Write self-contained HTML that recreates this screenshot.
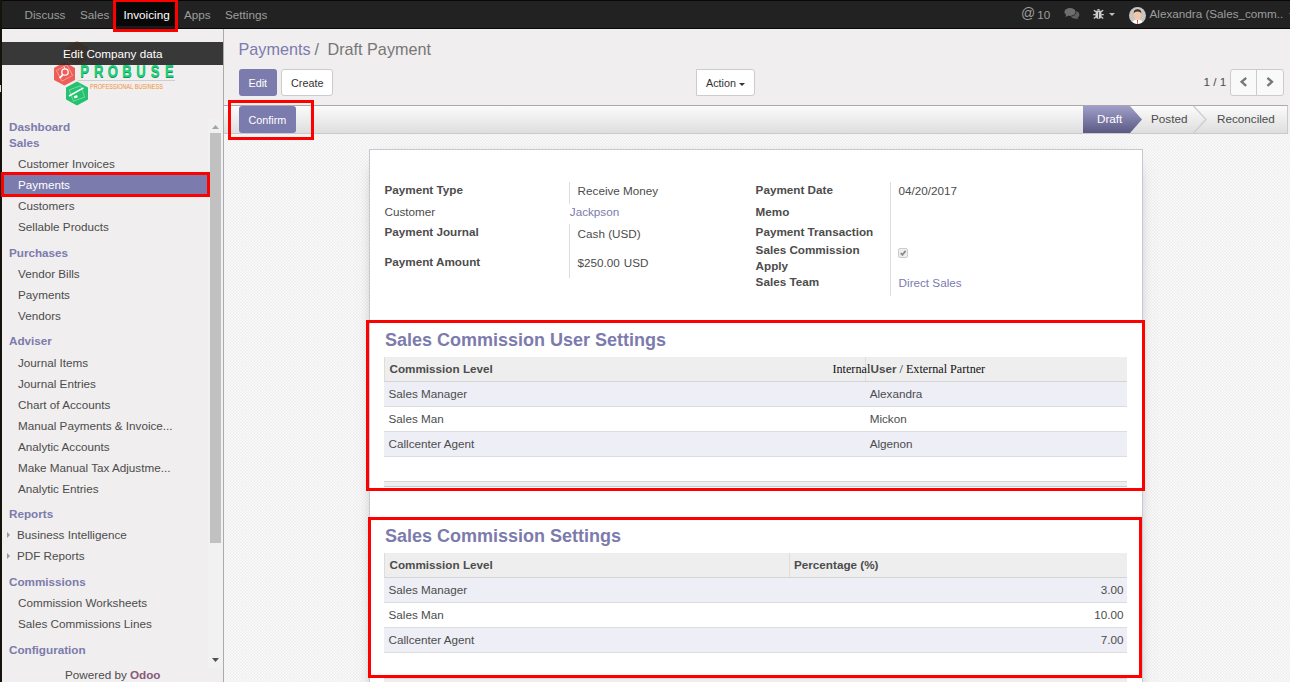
<!DOCTYPE html>
<html><head><meta charset="utf-8">
<style>
*{margin:0;padding:0;box-sizing:border-box}
html,body{width:1290px;height:682px;overflow:hidden;background:#f0eeee;font-family:"Liberation Sans",sans-serif;font-size:11.7px;color:#4c4c4c}
.a{position:absolute;white-space:nowrap;line-height:16px;height:16px}
.b{font-weight:bold}
.p{color:#7c7bad}
.box{position:absolute}
.red{position:absolute;border:3px solid #ff0000}
.nav{color:#9d9d9d}
.sh{color:#7c7bad;font-weight:bold}
.srf{font-family:"Liberation Serif",serif;color:#111}
svg{position:absolute;overflow:visible}
</style></head><body>

<div class="box" style="left:0px;top:0px;width:1290px;height:29px;background:#222;border-top:1px solid #080808;border-bottom:1px solid #080808"></div>
<div class="box" style="left:116px;top:1px;width:59px;height:25px;background:#080808"></div>
<div class="box" style="left:116px;top:26px;width:59px;height:2px;background:#1b1b1b"></div>
<div class="a nav" style="left:24.5px;top:7px;">Discuss</div>
<div class="a nav" style="left:80px;top:7px;">Sales</div>
<div class="a " style="left:123.5px;top:7px;color:#fff">Invoicing</div>
<div class="a nav" style="left:184px;top:7px;">Apps</div>
<div class="a nav" style="left:225px;top:7px;">Settings</div>
<div class="a nav" style="left:1021px;top:6px;font-size:14px;top:4.5px">@</div>
<div class="a nav" style="left:1037.3px;top:7px;">10</div>
<svg style="left:1064px;top:7px" width="16" height="13" viewBox="0 0 16 13"><ellipse cx="10.8" cy="7.8" rx="4.6" ry="3.9" fill="#606060"/><path d="M13.2 10.5 L14.6 12.2 L11 11.2Z" fill="#606060"/><ellipse cx="6" cy="5" rx="6.3" ry="4.5" fill="#222"/><ellipse cx="6" cy="5" rx="5.6" ry="3.9" fill="#6e6e6e"/><path d="M2.2 7.6 L1.4 10 L4.8 8.6Z" fill="#6e6e6e"/></svg>
<svg style="left:1093px;top:8px" width="11" height="11" viewBox="0 0 11 11"><path d="M3.6 2.4 Q5.5 -0.3 7.4 2.4Z" fill="#cdcdcd"/><path d="M3.3 2.8 H7.7 Q8.8 5.5 8.6 8.6 Q8 11 5.5 11 Q3 11 2.4 8.6 Q2.2 5.5 3.3 2.8Z" fill="#cdcdcd"/><path d="M0.8 2.2 L3.2 3.9 M10.2 2.2 L7.8 3.9 M0.2 6.6 H2.6 M10.8 6.6 H8.4 M0.8 10.6 L2.8 9 M10.2 10.6 L8.2 9" stroke="#cdcdcd" stroke-width="1.3"/><path d="M5.5 4.2 V10.4" stroke="#4a3f66" stroke-width="1"/></svg>
<svg style="left:1109px;top:13px" width="6" height="3" viewBox="0 0 6 3"><path d="M0 0H6L3 3Z" fill="#bdbdbd"/></svg>
<svg style="left:1129px;top:7px" width="17" height="17" viewBox="0 0 17 17"><defs><clipPath id="cav"><circle cx="8.5" cy="8.5" r="8.5"/></clipPath></defs><g clip-path="url(#cav)"><rect width="17" height="17" fill="#c9c5c0"/><path d="M3 17 Q3 12.5 8.5 12.5 Q14 12.5 14 17Z" fill="#fff"/><path d="M8 13 L9 13 L8.8 17 L8.2 17Z" fill="#d22"/><ellipse cx="8.5" cy="8" rx="3.6" ry="4.6" fill="#f1c7a6"/><path d="M4.7 6.5 Q4.5 2.2 8.5 2.2 Q12.5 2.2 12.3 6.5 Q11.5 4.5 8.5 4.6 Q5.5 4.5 4.7 6.5Z" fill="#333"/></g></svg>
<div class="a nav" style="left:1149.5px;top:6px;">Alexandra (Sales_comm..</div>
<svg style="left:1289px;top:13px" width="6" height="3" viewBox="0 0 6 3"><path d="M0 0H6L3 3Z" fill="#9d9d9d"/></svg>
<div class="box" style="left:0px;top:0px;width:2px;height:682px;background:#15140c"></div>
<div class="box" style="left:0px;top:85px;width:1px;height:7px;background:#dcdcdc"></div>
<div class="box" style="left:2px;top:29px;width:222px;height:653px;background:#f0eeee;border-right:1px solid #aaaab2"></div>
<svg style="left:52px;top:40px" width="125" height="67" viewBox="0 0 125 67">
<polygon points="25,1 36,7 36,19 25,25 14,19 14,7" fill="#f39a4a"/>
<polygon points="12.5,22 23,28 23,40 12.5,45.5 2,40 2,28" fill="#ee5d57"/>
<rect x="6.5" y="27" width="12" height="12" transform="rotate(-28 12.5 33)" fill="none" stroke="#f8a4a0" stroke-width="0.8"/><circle cx="13" cy="32" r="3.2" fill="none" stroke="#fff" stroke-width="1.3"/><path d="M13 28.8 L12 26.5" stroke="#fff" stroke-width="0.8"/><path d="M10.8 34.6 L7.6 38.2" stroke="#fff" stroke-width="1.8"/>
<polygon points="25,41.5 36,47.5 36,59.5 25,65.5 14,59.5 14,47.5" fill="#23c26f"/>
<rect x="19" y="47.5" width="12" height="12" transform="rotate(-20 25 53.5)" fill="none" stroke="#7ddca9" stroke-width="0.8"/><path d="M17 56 L31.5 47.8" stroke="#fff" stroke-width="1.5"/><rect x="22" y="55.5" width="3.5" height="2.5" fill="#fff" transform="rotate(-20 23.7 56.7)"/>
<g font-family="Liberation Sans" font-weight="bold" font-size="16" text-anchor="middle"><text transform="translate(32.7,0) scale(0.82,1)" y="38.2" fill="#139455">P</text><text transform="translate(32.7,0) scale(0.82,1)" y="37.3" fill="#1fd17a">P</text><text transform="translate(46.8,0) scale(0.82,1)" y="38.2" fill="#139455">R</text><text transform="translate(46.8,0) scale(0.82,1)" y="37.3" fill="#1fd17a">R</text><text transform="translate(60.9,0) scale(0.82,1)" y="38.2" fill="#139455">O</text><text transform="translate(60.9,0) scale(0.82,1)" y="37.3" fill="#1fd17a">O</text><text transform="translate(75.0,0) scale(0.82,1)" y="38.2" fill="#139455">B</text><text transform="translate(75.0,0) scale(0.82,1)" y="37.3" fill="#1fd17a">B</text><text transform="translate(89.1,0) scale(0.82,1)" y="38.2" fill="#139455">U</text><text transform="translate(89.1,0) scale(0.82,1)" y="37.3" fill="#1fd17a">U</text><text transform="translate(103.2,0) scale(0.82,1)" y="38.2" fill="#139455">S</text><text transform="translate(103.2,0) scale(0.82,1)" y="37.3" fill="#1fd17a">S</text><text transform="translate(117.3,0) scale(0.82,1)" y="38.2" fill="#139455">E</text><text transform="translate(117.3,0) scale(0.82,1)" y="37.3" fill="#1fd17a">E</text></g>
<line x1="26" y1="40.5" x2="123" y2="40.5" stroke="#cfcfcf" stroke-width="1"/>
<text x="38" y="49" font-family="Liberation Sans" font-size="6.6" fill="#f29238" textLength="73" lengthAdjust="spacingAndGlyphs">PROFESSIONAL BUSINESS</text>
</svg>
<div class="box" style="left:2px;top:42px;width:221px;height:23px;background:rgba(40,40,40,0.92)"></div>
<div class="a " style="left:63px;top:46px;color:#fff">Edit Company data</div>
<div class="box" style="left:208px;top:119px;width:15px;height:549px;background:#f1f1f1"></div>
<svg style="left:212px;top:125px" width="7" height="4" viewBox="0 0 7 4"><path d="M0 4H7L3.5 0Z" fill="#a3a3a3"/></svg>
<div class="box" style="left:210px;top:133px;width:11px;height:410px;background:#c1c1c1"></div>
<svg style="left:212px;top:658px" width="7" height="4" viewBox="0 0 7 4"><path d="M0 0H7L3.5 4Z" fill="#505050"/></svg>
<div class="box" style="left:2px;top:175px;width:206px;height:19px;background:#7c7bad"></div>
<div class="a sh" style="left:9px;top:119px;">Dashboard</div>
<div class="a sh" style="left:9px;top:135px;">Sales</div>
<div class="a " style="left:18px;top:156px;">Customer Invoices</div>
<div class="a " style="left:18px;top:177px;color:#fff">Payments</div>
<div class="a " style="left:18px;top:198px;">Customers</div>
<div class="a " style="left:18px;top:219px;">Sellable Products</div>
<div class="a sh" style="left:9px;top:245px;">Purchases</div>
<div class="a " style="left:18px;top:266px;">Vendor Bills</div>
<div class="a " style="left:18px;top:287px;">Payments</div>
<div class="a " style="left:18px;top:308px;">Vendors</div>
<div class="a sh" style="left:9px;top:333px;">Adviser</div>
<div class="a " style="left:18px;top:355px;">Journal Items</div>
<div class="a " style="left:18px;top:376px;">Journal Entries</div>
<div class="a " style="left:18px;top:397px;">Chart of Accounts</div>
<div class="a " style="left:18px;top:418px;">Manual Payments &amp; Invoice...</div>
<div class="a " style="left:18px;top:439px;">Analytic Accounts</div>
<div class="a " style="left:18px;top:460px;">Make Manual Tax Adjustme...</div>
<div class="a " style="left:18px;top:481px;">Analytic Entries</div>
<div class="a sh" style="left:9px;top:506px;">Reports</div>
<div class="a " style="left:17px;top:527px;">Business Intelligence</div>
<svg style="left:7px;top:532px" width="3" height="6" viewBox="0 0 3 6"><path d="M0 0L3 3L0 6Z" fill="#9a9a9a"/></svg>
<div class="a " style="left:17px;top:548px;">PDF Reports</div>
<svg style="left:7px;top:553px" width="3" height="6" viewBox="0 0 3 6"><path d="M0 0L3 3L0 6Z" fill="#9a9a9a"/></svg>
<div class="a sh" style="left:9px;top:574px;">Commissions</div>
<div class="a " style="left:18px;top:595px;">Commission Worksheets</div>
<div class="a " style="left:18px;top:616px;">Sales Commissions Lines</div>
<div class="a sh" style="left:9px;top:642px;">Configuration</div>
<div class="a " style="left:65px;top:667px;">Powered by <b style="color:#875a7b">Odoo</b></div>
<div class="box" style="left:224px;top:29px;width:1066px;height:76px;background:#f0eeee"></div>
<div class="a p" style="left:238.5px;top:41px;font-size:16.2px;">Payments</div>
<div class="a " style="left:314.5px;top:41px;font-size:16.2px;color:#777">/</div>
<div class="a " style="left:327.5px;top:41px;font-size:16.2px;color:#777">Draft Payment</div>
<div class="box" style="left:239px;top:69px;width:38px;height:27px;background:#7c7bad;border-radius:3px"></div>
<div class="a " style="left:248.5px;top:75px;font-size:10.8px;color:#fff">Edit</div>
<div class="box" style="left:281px;top:69px;width:52px;height:27px;background:#fff;border:1px solid #ccc;border-radius:3px"></div>
<div class="a " style="left:291px;top:75px;font-size:10.8px;color:#333">Create</div>
<div class="box" style="left:696px;top:69px;width:59px;height:27px;background:#fff;border:1px solid #ccc;border-radius:0 3px 3px 0"></div>
<div class="a " style="left:706px;top:75px;font-size:10.8px;color:#333">Action</div>
<svg style="left:739px;top:83px" width="6" height="3" viewBox="0 0 6 3"><path d="M0 0H6L3 3Z" fill="#333"/></svg>
<div class="a " style="left:1203.4px;top:74px;color:#4c4c4c">1 / 1</div>
<div class="box" style="left:1230px;top:69px;width:54px;height:27px;background:#f9f9f9;border:1px solid #ccc;border-radius:3px"></div>
<div class="box" style="left:1256px;top:69px;width:1px;height:27px;background:#ccc"></div>
<svg style="left:1240px;top:77px" width="8" height="10" viewBox="0 0 8 10"><path d="M6.2 0.8 L1.6 4.85 L6.2 8.9" fill="none" stroke="#777" stroke-width="2.3"/></svg>
<svg style="left:1266px;top:77px" width="8" height="10" viewBox="0 0 8 10"><path d="M1.4 0.8 L6 4.85 L1.4 8.9" fill="none" stroke="#777" stroke-width="2.3"/></svg>
<svg style="left:224px;top:134px" width="1066" height="548"><defs><pattern id="wv" width="3" height="3" patternUnits="userSpaceOnUse"><rect width="3" height="3" fill="#f7f7f7"/><rect width="3" height="1" fill="#efefef"/><rect width="1" height="3" fill="#efefef"/><rect width="1" height="1" fill="#fdfdfd"/></pattern></defs><rect width="1066" height="548" fill="url(#wv)"/></svg>
<div class="box" style="left:224px;top:105px;width:1064px;height:29px;background:linear-gradient(#fbfbfb,#dedede);border-top:1px solid #a9a9a9;border-bottom:1px solid #cacaca;border-right:1px solid #cacaca"></div>
<div class="box" style="left:239px;top:106px;width:57px;height:27px;background:#7c7bad;border-radius:3px"></div>
<div class="a " style="left:248.5px;top:112px;font-size:10.8px;color:#fff">Confirm</div>
<svg style="left:1083px;top:106px" width="205" height="27" viewBox="0 0 205 27">
<defs><linearGradient id="gd" x1="0" y1="0" x2="0" y2="1"><stop offset="0" stop-color="#a09fc9"/><stop offset="1" stop-color="#5a5983"/></linearGradient></defs>
<polygon points="0,0 47,0 59,13.5 47,27 0,27" fill="url(#gd)"/>
<polyline points="110.5,0 123,13.5 110.5,27" fill="none" stroke="#cfcfcf" stroke-width="1.4"/>
</svg>
<div class="a " style="left:1097px;top:111px;color:#fff">Draft</div>
<div class="a " style="left:1151px;top:111px;color:#4c4c4c">Posted</div>
<div class="a " style="left:1217px;top:111px;color:#4c4c4c">Reconciled</div>
<div class="box" style="left:369px;top:149px;width:774px;height:600px;background:#fff;border:1px solid #c8c8d3;box-shadow:0 5px 20px -15px #000"></div>
<div class="a b" style="left:384.5px;top:182px;">Payment Type</div>
<div class="box" style="left:569px;top:182px;width:1px;height:22px;background:#ddd"></div>
<div class="a " style="left:577.6px;top:183px;">Receive Money</div>
<div class="a " style="left:384.5px;top:204px;">Customer</div>
<div class="a p" style="left:569.8px;top:204px;">Jackpson</div>
<div class="a b" style="left:384.5px;top:224px;">Payment Journal</div>
<div class="box" style="left:569px;top:224px;width:1px;height:54px;background:#ddd"></div>
<div class="a " style="left:577.6px;top:225.5px;">Cash (USD)</div>
<div class="a b" style="left:384.5px;top:254px;">Payment Amount</div>
<div class="a " style="left:577.6px;top:255px;">$250.00<span style="margin-left:4px">USD</span></div>
<div class="a b" style="left:755.6px;top:182px;">Payment Date</div>
<div class="box" style="left:890px;top:182px;width:1px;height:114px;background:#ddd"></div>
<div class="a " style="left:898.6px;top:183px;">04/20/2017</div>
<div class="a b" style="left:755.6px;top:204px;">Memo</div>
<div class="a b" style="left:755.6px;top:224px;">Payment Transaction</div>
<div class="a b" style="left:755.6px;top:242px;">Sales Commission</div>
<div class="a b" style="left:755.6px;top:258px;">Apply</div>
<div class="a b" style="left:755.6px;top:274px;">Sales Team</div>
<div class="box" style="left:898px;top:248px;width:10px;height:10px;background:#eee;border:1px solid #ccc;border-radius:2px"></div>
<svg style="left:900px;top:250px" width="6" height="6" viewBox="0 0 6 6"><path d="M0.7 3.1 L2.4 4.9 L5.6 0.9" fill="none" stroke="#8a8a8a" stroke-width="1.7"/></svg>
<div class="a p" style="left:898.6px;top:275px;">Direct Sales</div>
<div class="a sh" style="left:385px;top:332px;font-size:18px;">Sales Commission User Settings</div>
<div class="box" style="left:384px;top:357px;width:743px;height:25px;background:#eee;border-left:1px solid #ddd;border-bottom:1px solid #d5d5d5"></div>
<div class="box" style="left:865px;top:357px;width:1px;height:24px;background:#ddd"></div>
<div class="a b" style="left:389.5px;top:361px;">Commission Level</div>
<div class="a srf" style="left:832.5px;top:361px;font-size:12.15px;">Internal</div>
<div class="a b" style="left:870.5px;top:361px;">User<span class="srf" style="font-weight:normal;font-size:12.15px"> / External Partner</span></div>
<div class="box" style="left:384px;top:382px;width:743px;height:25px;background:#eeeef6;border-bottom:1px solid #ddd"></div>
<div class="a " style="left:388.5px;top:386px;">Sales Manager</div>
<div class="a " style="left:869.7px;top:386px;">Alexandra</div>
<div class="box" style="left:384px;top:407px;width:743px;height:25px;background:#fff;border-bottom:1px solid #ddd"></div>
<div class="a " style="left:388.5px;top:411px;">Sales Man</div>
<div class="a " style="left:869.7px;top:411px;">Mickon</div>
<div class="box" style="left:384px;top:432px;width:743px;height:25px;background:#eeeef6;border-bottom:1px solid #ddd"></div>
<div class="a " style="left:388.5px;top:436px;">Callcenter Agent</div>
<div class="a " style="left:869.7px;top:436px;">Algenon</div>
<div class="box" style="left:384px;top:481px;width:743px;height:6px;background:#eee;border-top:1px solid #d6d6d6;border-bottom:1px solid #cacaca"></div>
<div class="a sh" style="left:385px;top:528px;font-size:18px;">Sales Commission Settings</div>
<div class="box" style="left:384px;top:553px;width:743px;height:25px;background:#eee;border-left:1px solid #ddd;border-bottom:1px solid #d5d5d5"></div>
<div class="box" style="left:789px;top:553px;width:1px;height:24px;background:#ddd"></div>
<div class="a b" style="left:389.5px;top:557px;">Commission Level</div>
<div class="a b" style="left:794px;top:557px;">Percentage (%)</div>
<div class="box" style="left:384px;top:578px;width:743px;height:25px;background:#eeeef6;border-bottom:1px solid #ddd"></div>
<div class="a " style="left:388.5px;top:582px;">Sales Manager</div>
<div class="a" style="right:166.5px;top:581.5px">3.00</div>
<div class="box" style="left:384px;top:603px;width:743px;height:25px;background:#fff;border-bottom:1px solid #ddd"></div>
<div class="a " style="left:388.5px;top:607px;">Sales Man</div>
<div class="a" style="right:166.5px;top:606.5px">10.00</div>
<div class="box" style="left:384px;top:628px;width:743px;height:25px;background:#eeeef6;border-bottom:1px solid #ddd"></div>
<div class="a " style="left:388.5px;top:632px;">Callcenter Agent</div>
<div class="a" style="right:166.5px;top:631.5px">7.00</div>
<div class="box" style="left:384px;top:678px;width:743px;height:6px;background:#eee;border-top:1px solid #d6d6d6;border-bottom:1px solid #cacaca"></div>
<div class="red" style="left:113px;top:-1px;width:65px;height:33px"></div>
<div class="red" style="left:1px;top:172px;width:209px;height:25px"></div>
<div class="red" style="left:228px;top:100px;width:86px;height:40px"></div>
<div class="red" style="left:366px;top:320px;width:779px;height:171px"></div>
<div class="red" style="left:368px;top:517px;width:774px;height:161px"></div>
</body></html>
